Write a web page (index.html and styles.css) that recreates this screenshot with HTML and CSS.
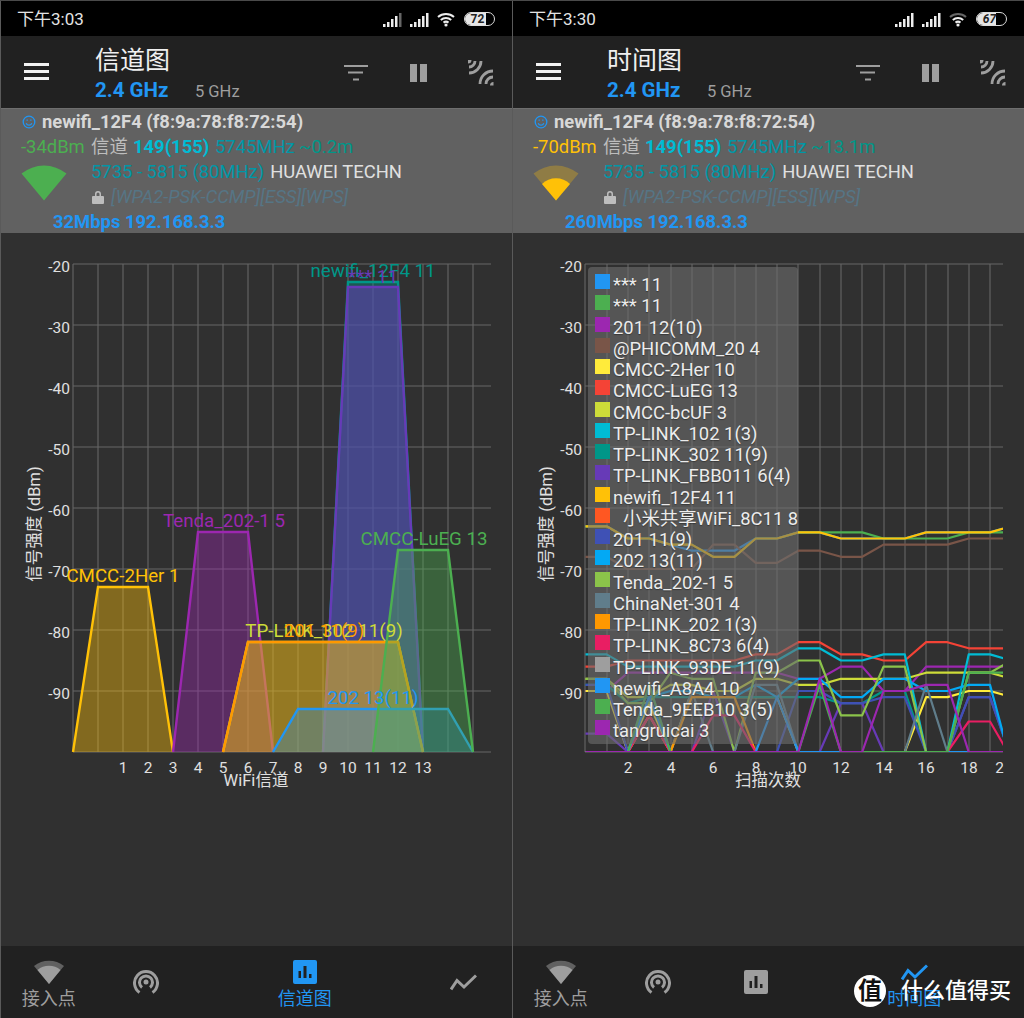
FILE: index.html
```html
<!DOCTYPE html>
<html lang="zh">
<head>
<meta charset="utf-8">
<title>WiFi 信道图 / 时间图</title>
<link rel="stylesheet" href="styles.css">
</head>
<body>
<main class="app">

<section class="pane">
  <header class="status">
    <span class="clock">下午3:03</span>
    <div class="status-icons">
      <svg class="sig" viewBox="0 0 19 15"><path class="on" d="M0 12h2.5v3H0zM4 10h2.5v5H4zM8 7h2.5v8H8zM12 4h2.5v11H12z"/><path class="dim" d="M16 1h2.5v14H16z"/></svg>
      <svg class="sig" viewBox="0 0 19 15"><path class="on" d="M0 12h2.5v3H0zM4 10h2.5v5H4zM8 7h2.5v8H8zM12 4h2.5v11H12zM16 1h2.5v14H16z"/></svg>
      <svg class="wifi-status" viewBox="0 0 20 16"><path class="arc" d="M1 6a12 12 0 0 1 16 0"/><path class="arc" d="M3.8 9a8 8 0 0 1 10.4 0"/><path class="arc" d="M6.5 11.6a4 4 0 0 1 5 0"/><circle class="on" cx="9" cy="14" r="1.6"/></svg>
      <span class="battery"><span class="battery-fill level-72"></span><b class="battery-num">72</b></span>
    </div>
  </header>
  <div class="toolbar">
    <svg class="menu" viewBox="0 0 25 17"><path d="M0 0h25v3H0zM0 7h25v3H0zM0 14h25v3H0z"/></svg>
    <div class="heading">
      <h1 class="title">信道图</h1>
      <div class="bands"><span class="band-on">2.4 GHz</span><span class="band-off">5 GHz</span></div>
    </div>
    <svg class="act-filter" viewBox="0 0 24 16"><path d="M0 0h24v2H0zM4 6.5h15v2H4zM9 13.5h6v2H9z"/></svg>
    <svg class="act-pause" viewBox="0 0 17 18"><path d="M0 0h7v18H0zM10 0h7v18h-7z"/></svg>
    <svg class="act-scan" viewBox="0 0 26 26"><path class="scan-line" d="M7 1A6 6 0 0 1 1 7M13 1A12 12 0 0 1 1 13M18 24A7 7 0 0 1 25 17M12 24A13 13 0 0 1 25 11"/><path class="scan-dot" d="M0 0h3.5a3.5 3.5 0 0 1-3.5 3.5zM25.5 25.5h-3.5a3.5 3.5 0 0 1 3.5-3.5z"/></svg>
  </div>
  <div class="info">
    <div class="ssid"><svg class="smile" viewBox="0 0 14 14"><circle cx="7" cy="7" r="5.8"/><path d="M4.2 8.3a3 3 0 0 0 5.6 0"/><path d="M4.5 5.2h1.3M8.2 5.2h1.3"/></svg><span>newifi_12F4 (f8:9a:78:f8:72:54)</span></div>
    <div class="line-signal"><span class="lvl-good">-34dBm</span><span class="muted">信道</span><b class="ch">149(155)</b><span class="freq">5745MHz</span><span class="dist">~0.2m</span></div>
    <div class="info-mid">
      <svg class="fan" viewBox="0 0 46 36"><path class="fan-good" d="M23 35.5 0.5 8.5A36 36 0 0 1 45.5 8.5Z"/></svg>
      <div class="info-col">
        <div class="line-range"><span class="freq">5735 - 5815 (80MHz)</span><span class="vendor">HUAWEI TECHN</span></div>
        <div class="line-sec"><svg class="lock" viewBox="0 0 12 14"><path d="M1 6h10a1 1 0 0 1 1 1v6a1 1 0 0 1-1 1H1a1 1 0 0 1-1-1V7a1 1 0 0 1 1-1zM3 6V4a3 3 0 0 1 6 0v2H7.5V4a1.5 1.5 0 0 0-3 0v2z"/></svg><i class="sec">[WPA2-PSK-CCMP][ESS][WPS]</i></div>
      </div>
    </div>
    <div class="speed">32Mbps 192.168.3.3</div>
  </div>
  <div class="chart">
    <svg class="plot" viewBox="0 233 512 713">
      <path class="grid" d="M73 264H491M73 325H491M73 386H491M73 447H491M73 508H491M73 569H491M73 630H491M73 691H491M73 752H491M73 264V752M98 264V752M123 264V752M148 264V752M173 264V752M198 264V752M223 264V752M248 264V752M273 264V752M298 264V752M323 264V752M348 264V752M373 264V752M398 264V752M423 264V752M448 264V752M473 264V752"/>
      <g class="ylabels"><text x="70" y="272">-20</text><text x="70" y="333">-30</text><text x="70" y="394">-40</text><text x="70" y="455">-50</text><text x="70" y="516">-60</text><text x="70" y="577">-70</text><text x="70" y="638">-80</text><text x="70" y="699">-90</text></g>
      <text class="ytitle" transform="translate(40 524) rotate(-90)">信号强度 (dBm)</text>
      <g class="xlabels"><text x="123" y="773">1</text><text x="148" y="773">2</text><text x="173" y="773">3</text><text x="198" y="773">4</text><text x="223" y="773">5</text><text x="248" y="773">6</text><text x="273" y="773">7</text><text x="298" y="773">8</text><text x="323" y="773">9</text><text x="348" y="773">10</text><text x="373" y="773">11</text><text x="398" y="773">12</text><text x="423" y="773">13</text></g>
      <text class="xtitle" x="256" y="786">WiFi信道</text>
      <polyline class="net c-teal" points="323,752 348,282 398,282 423,752"/>
      <polyline class="net c-deep" points="323,752 348,287 398,287 423,752"/>
      <polyline class="net c-amber" points="73,752 98,587 148,587 173,752"/>
      <polyline class="net c-purple" points="173,752 198,532 248,532 273,752"/>
      <polyline class="net c-lime" points="223,752 248,642 398,642 423,752"/>
      <polyline class="net c-orange" points="223,752 248,642 398,642 423,752"/>
      <polyline class="net c-blue" points="273,752 298,709 448,709 473,752"/>
      <polyline class="net c-green" points="373,752 398,550 448,550 473,752"/>
      <g class="netlabels">
        <text class="t-amber" x="123" y="582">CMCC-2Her 1</text>
        <text class="t-purple" x="224" y="527">Tenda_202-1 5</text>
        <text class="t-lime" x="324" y="637">TP-LINK_302 11(9)</text>
        <text class="t-orange" x="324" y="637">201 11(9)</text>
        <text class="t-teal" x="373" y="277">newifi_12F4 11</text>
        <text class="t-deep" x="373" y="283">*** 11</text>
        <text class="t-green" x="424" y="545">CMCC-LuEG 13</text>
        <text class="t-blue" x="373" y="704">202 13(11)</text>
      </g>
    </svg>
  </div>
  <nav class="nav">
    <div class="tab"><svg class="tab-fan" viewBox="0 0 30 24"><path class="fan-back" d="M15 24 0 6A24 24 0 0 1 30 6Z"/><path class="fan-front" d="M15 24 3.5 10A18 18 0 0 1 26.5 10Z"/></svg><span class="tab-label">接入点</span></div>
    <div class="tab"><svg class="tab-cast" viewBox="0 0 26 26"><path class="cast-line" d="M6.5 23.5A11.5 11.5 0 1 1 19.5 23.5M9 18.5A6.5 6.5 0 1 1 17 18.5"/><circle class="cast-dot" cx="13" cy="13" r="2.5"/></svg></div>
    <div class="tab tab-wide active"><svg class="tab-bars" viewBox="0 0 24 24"><rect class="bars-bg" width="24" height="24" rx="2"/><path class="bars-fg" d="M5.5 11H8v7H5.5zM10.5 6h3v12h-3zM16 14h2.5v4H16z"/></svg><span class="tab-label">信道图</span></div>
    <div class="tab"><svg class="tab-line" viewBox="0 0 27 17"><path d="M1 15.5 7 6.5 14 13 26 1.5"/></svg></div>
  </nav>
</section>

<section class="pane">
  <header class="status">
    <span class="clock">下午3:30</span>
    <div class="status-icons">
      <svg class="sig" viewBox="0 0 19 15"><path class="on" d="M0 12h2.5v3H0zM4 10h2.5v5H4zM8 7h2.5v8H8zM12 4h2.5v11H12zM16 1h2.5v14H16z"/></svg>
      <svg class="sig" viewBox="0 0 19 15"><path class="on" d="M0 12h2.5v3H0zM4 10h2.5v5H4zM8 7h2.5v8H8zM12 4h2.5v11H12zM16 1h2.5v14H16z"/></svg>
      <svg class="wifi-status" viewBox="0 0 20 16"><path class="arc arc-dim" d="M1 6a12 12 0 0 1 16 0"/><path class="arc" d="M3.8 9a8 8 0 0 1 10.4 0"/><path class="arc" d="M6.5 11.6a4 4 0 0 1 5 0"/><circle class="on" cx="9" cy="14" r="1.6"/></svg>
      <span class="battery"><span class="battery-fill level-67"></span><b class="battery-num slant">67</b></span>
    </div>
  </header>
  <div class="toolbar">
    <svg class="menu" viewBox="0 0 25 17"><path d="M0 0h25v3H0zM0 7h25v3H0zM0 14h25v3H0z"/></svg>
    <div class="heading">
      <h1 class="title">时间图</h1>
      <div class="bands"><span class="band-on">2.4 GHz</span><span class="band-off">5 GHz</span></div>
    </div>
    <svg class="act-filter" viewBox="0 0 24 16"><path d="M0 0h24v2H0zM4 6.5h15v2H4zM9 13.5h6v2H9z"/></svg>
    <svg class="act-pause" viewBox="0 0 17 18"><path d="M0 0h7v18H0zM10 0h7v18h-7z"/></svg>
    <svg class="act-scan" viewBox="0 0 26 26"><path class="scan-line" d="M7 1A6 6 0 0 1 1 7M13 1A12 12 0 0 1 1 13M18 24A7 7 0 0 1 25 17M12 24A13 13 0 0 1 25 11"/><path class="scan-dot" d="M0 0h3.5a3.5 3.5 0 0 1-3.5 3.5zM25.5 25.5h-3.5a3.5 3.5 0 0 1 3.5-3.5z"/></svg>
  </div>
  <div class="info">
    <div class="ssid"><svg class="smile" viewBox="0 0 14 14"><circle cx="7" cy="7" r="5.8"/><path d="M4.2 8.3a3 3 0 0 0 5.6 0"/><path d="M4.5 5.2h1.3M8.2 5.2h1.3"/></svg><span>newifi_12F4 (f8:9a:78:f8:72:54)</span></div>
    <div class="line-signal"><span class="lvl-mid">-70dBm</span><span class="muted">信道</span><b class="ch">149(155)</b><span class="freq">5745MHz</span><span class="dist">~13.1m</span></div>
    <div class="info-mid">
      <svg class="fan" viewBox="0 0 46 36"><path class="fan-mid-back" d="M23 35.5 0.5 8.5A36 36 0 0 1 45.5 8.5Z"/><path class="fan-mid" d="M23 35.5 9 19A20 20 0 0 1 37 19Z"/></svg>
      <div class="info-col">
        <div class="line-range"><span class="freq">5735 - 5815 (80MHz)</span><span class="vendor">HUAWEI TECHN</span></div>
        <div class="line-sec"><svg class="lock" viewBox="0 0 12 14"><path d="M1 6h10a1 1 0 0 1 1 1v6a1 1 0 0 1-1 1H1a1 1 0 0 1-1-1V7a1 1 0 0 1 1-1zM3 6V4a3 3 0 0 1 6 0v2H7.5V4a1.5 1.5 0 0 0-3 0v2z"/></svg><i class="sec">[WPA2-PSK-CCMP][ESS][WPS]</i></div>
      </div>
    </div>
    <div class="speed">260Mbps 192.168.3.3</div>
  </div>
  <div class="chart">
    <svg class="plot" viewBox="0 233 512 713">
      <defs><clipPath id="tickclip"><rect x="0" y="233" width="491.5" height="713"/></clipPath></defs>
      <path class="grid" d="M73 264H491M73 325H491M73 386H491M73 447H491M73 508H491M73 569H491M73 630H491M73 691H491M73 752H491M73 264V752M95 264V752M116 264V752M137 264V752M159 264V752M180 264V752M201 264V752M223 264V752M244 264V752M265 264V752M286 264V752M308 264V752M329 264V752M350 264V752M372 264V752M393 264V752M414 264V752M436 264V752M457 264V752M478 264V752"/>
      <g class="ylabels"><text x="70" y="272">-20</text><text x="70" y="333">-30</text><text x="70" y="394">-40</text><text x="70" y="455">-50</text><text x="70" y="516">-60</text><text x="70" y="577">-70</text><text x="70" y="638">-80</text><text x="70" y="699">-90</text></g>
      <text class="ytitle" transform="translate(40 524) rotate(-90)">信号强度 (dBm)</text>
      <g class="xlabels" clip-path="url(#tickclip)"><text x="116" y="773">2</text><text x="159" y="773">4</text><text x="201" y="773">6</text><text x="244" y="773">8</text><text x="286" y="773">10</text><text x="329" y="773">12</text><text x="372" y="773">14</text><text x="414" y="773">16</text><text x="457" y="773">18</text><text x="492" y="773">20</text></g>
      <text class="xtitle" x="256" y="786">扫描次数</text>
      <svg class="series" x="73.3" y="264" width="417.7" height="488" viewBox="0 20 19.61 80" preserveAspectRatio="none">
        <polyline class="ln s-blue" points="0,63 1,63 2,65 3,65 4,66 5,67 6,67 7,67 8,65 9,65 10,64 11,64 12,65 13,65 14,65 15,65 16,64 17,64 18,64 19,64 20,63"/>
        <polyline class="ln s-green" points="0,63 1,63 2,65 3,65 4,66 5,66 6,68 7,68 8,65 9,65 10,64 11,64 12,64 13,64 14,65 15,65 16,65 17,65 18,64 19,64 20,64"/>
        <polyline class="ln s-purple" points="0,90 1,90 2,87 3,87 4,87 5,87 6,87 7,87 8,87 9,87 10,88 11,88 12,86 13,86 14,90 15,90 16,86 17,86 18,86 19,86 20,86"/>
        <polyline class="ln s-brown" points="0,68 1,68 2,70 3,70 4,70 5,70 6,66 7,66 8,69 9,69 10,67 11,67 12,68 13,68 14,66 15,66 16,66 17,66 18,65 19,65 20,65"/>
        <polyline class="ln s-yellow" points="0,90 1,90 2,100 3,92 4,100 5,90 6,91 7,91 8,91 9,91 10,100 11,100 12,100 13,100 14,100 15,100 16,91 17,91 18,90 19,90 20,91"/>
        <polyline class="ln s-red" points="0,86 1,86 2,85 3,85 4,85 5,85 6,85 7,85 8,84 9,84 10,82 11,82 12,84 13,84 14,85 15,85 16,82 17,82 18,83 19,83 20,83"/>
        <polyline class="ln s-lime" points="0,88 1,88 2,91 3,91 4,89 5,89 6,90 7,90 8,88 9,88 10,89 11,89 12,88 13,88 14,88 15,88 16,87 17,87 18,87 19,87 20,88"/>
        <polyline class="ln s-cyan" points="0,84 1,84 2,86 3,86 4,86 5,86 6,86 7,86 8,85 9,85 10,83 11,83 12,85 13,85 14,84 15,84 16,100 17,100 18,84 19,84 20,85"/>
        <polyline class="ln s-teal" points="0,89 1,89 2,92 3,91 4,91 5,91 6,91 7,91 8,91 9,91 10,91 11,91 12,92 13,92 14,90 15,90 16,100 17,100 18,100 19,100 20,100"/>
        <polyline class="ln s-deep" points="0,97 1,97 2,100 3,100 4,100 5,100 6,90 7,100 8,100 9,100 10,100 11,100 12,92 13,92 14,100 15,100 16,100 17,100 18,91 19,91 20,101"/>
        <polyline class="ln s-amber" points="0,63 1,63 2,65 3,65 4,66 5,66 6,68 7,68 8,65 9,65 10,64 11,64 12,65 13,65 14,65 15,65 16,64 17,64 18,64 19,64 20,63"/>
        <polyline class="ln s-dorange" points="0,100 1,100 2,100 3,94 4,100 5,100 6,100 7,100 8,100 9,100 10,100 11,100 12,100 13,100 14,100 15,100 16,100 17,100 18,100 19,100 20,100"/>
        <polyline class="ln s-indigo" points="0,89 1,89 2,100 3,89 4,100 5,100 6,100 7,100 8,100 9,100 10,90 11,90 12,92 13,92 14,91 15,91 16,100 17,100 18,91 19,91 20,101"/>
        <polyline class="ln s-sky" points="0,100 1,100 2,100 3,91 4,90 5,90 6,91 7,91 8,89 9,91 10,88 11,88 12,91 13,91 14,88 15,88 16,90 17,90 18,89 19,89 20,102"/>
        <polyline class="ln s-lgreen" points="0,88 1,88 2,92 3,92 4,87 5,88 6,88 7,100 8,87 9,87 10,85 11,85 12,94 13,94 14,86 15,86 16,100 17,100 18,87 19,87 20,85"/>
        <polyline class="ln s-slate" points="0,100 1,100 2,100 3,100 4,100 5,90 6,100 7,100 8,89 9,89 10,100 11,100 12,100 13,100 14,100 15,100 16,89 17,100 18,100 19,100 20,100"/>
        <polyline class="ln s-orange" points="0,100 1,100 2,100 3,94 4,100 5,91 6,91 7,91 8,100 9,100 10,100 11,100 12,100 13,100 14,100 15,100 16,100 17,100 18,100 19,100 20,100"/>
        <polyline class="ln s-pink" points="0,100 1,100 2,100 3,94 4,100 5,100 6,94 7,94 8,100 9,100 10,100 11,100 12,100 13,100 14,100 15,100 16,100 17,100 18,95 19,95 20,101"/>
        <polyline class="ln s-blue" points="0,100 1,100 2,100 3,91 4,100 5,100 6,100 7,100 8,100 9,91 10,100 11,100 12,100 13,100 14,100 15,100 16,100 17,100 18,100 19,100 20,100"/>
        <polyline class="ln s-green" points="0,100 1,100 2,100 3,89 4,100 5,100 6,100 7,100 8,100 9,100 10,100 11,89 12,100 13,100 14,100 15,100 16,100 17,100 18,87 19,87 20,87"/>
        <polyline class="ln s-purple" points="0,100 1,100 2,100 3,100 4,100 5,100 6,100 7,100 8,100 9,100 10,100 11,88 12,100 13,100 14,90 15,90 16,89 17,89 18,100 19,100 20,100"/>
      </svg>
    </svg>
    <ul class="legend">
      <li><i class="sw b-blue"></i>*** 11</li>
      <li><i class="sw b-green"></i>*** 11</li>
      <li><i class="sw b-purple"></i>201 12(10)</li>
      <li><i class="sw b-brown"></i>@PHICOMM_20 4</li>
      <li><i class="sw b-yellow"></i>CMCC-2Her 10</li>
      <li><i class="sw b-red"></i>CMCC-LuEG 13</li>
      <li><i class="sw b-lime"></i>CMCC-bcUF 3</li>
      <li><i class="sw b-cyan"></i>TP-LINK_102 1(3)</li>
      <li><i class="sw b-teal"></i>TP-LINK_302 11(9)</li>
      <li><i class="sw b-deep"></i>TP-LINK_FBB011 6(4)</li>
      <li><i class="sw b-amber"></i>newifi_12F4 11</li>
      <li class="indent"><i class="sw b-dorange"></i>小米共享WiFi_8C11 8</li>
      <li><i class="sw b-indigo"></i>201 11(9)</li>
      <li><i class="sw b-sky"></i>202 13(11)</li>
      <li><i class="sw b-lgreen"></i>Tenda_202-1 5</li>
      <li><i class="sw b-slate"></i>ChinaNet-301 4</li>
      <li><i class="sw b-orange"></i>TP-LINK_202 1(3)</li>
      <li><i class="sw b-pink"></i>TP-LINK_8C73 6(4)</li>
      <li><i class="sw b-grey"></i>TP-LINK_93DE 11(9)</li>
      <li><i class="sw b-blue"></i>newifi_A8A4 10</li>
      <li><i class="sw b-green"></i>Tenda_9EEB10 3(5)</li>
      <li><i class="sw b-purple"></i>tangruicai 3</li>
    </ul>
  </div>
  <nav class="nav">
    <div class="tab"><svg class="tab-fan" viewBox="0 0 30 24"><path class="fan-back" d="M15 24 0 6A24 24 0 0 1 30 6Z"/><path class="fan-front" d="M15 24 3.5 10A18 18 0 0 1 26.5 10Z"/></svg><span class="tab-label">接入点</span></div>
    <div class="tab"><svg class="tab-cast" viewBox="0 0 26 26"><path class="cast-line" d="M6.5 23.5A11.5 11.5 0 1 1 19.5 23.5M9 18.5A6.5 6.5 0 1 1 17 18.5"/><circle class="cast-dot" cx="13" cy="13" r="2.5"/></svg></div>
    <div class="tab"><svg class="tab-bars idle" viewBox="0 0 24 24"><rect class="bars-bg" width="24" height="24" rx="2"/><path class="bars-fg" d="M5.5 11H8v7H5.5zM10.5 6h3v12h-3zM16 14h2.5v4H16z"/></svg></div>
    <div class="tab tab-wide active"><svg class="tab-line" viewBox="0 0 27 17"><path d="M1 15.5 7 6.5 14 13 26 1.5"/></svg><span class="tab-label">时间图</span></div>
  </nav>
  <div class="watermark"><span class="wm-badge">值</span><span class="wm-text">什么值得买</span></div>
</section>

</main>
</body>
</html>
```

FILE: styles.css
```css
* { box-sizing: border-box; }
html, body { margin: 0; padding: 0; background: #303030; }
body { font-family: Roboto, "Noto Sans CJK SC", sans-serif; color: #e0e0e0; }

.app { display: flex; width: 1024px; height: 1018px; overflow: hidden; }
.pane { position: relative; display: flex; flex-direction: column; width: 512px; height: 1018px; }
.pane::before { content: ""; position: absolute; left: 0; top: 0; bottom: 0; width: 1px; background: #5a5a5a; z-index: 5; }
.pane::after { content: ""; position: absolute; left: 0; right: 0; top: 0; height: 1px; background: #4a4a4a; z-index: 5; }

/* status bar */
.status { flex: none; height: 36px; background: #000; display: flex; align-items: center; justify-content: space-between; padding: 2px 17px 0 17px; }
.clock { font-size: 17px; color: #e4e4e4; line-height: 1; }
.status-icons { display: flex; align-items: center; }
.sig { width: 19px; height: 15px; margin-right: 8px; }
.on { fill: #eee; }
.dim { fill: #666; }
.wifi-status { width: 20px; height: 16px; margin-right: 7px; }
.arc { fill: none; stroke: #eee; stroke-width: 2; }
.arc-dim { stroke: #666; }
.battery { position: relative; display: block; width: 31px; height: 14px; border: 1.5px solid #ddd; border-radius: 7px; overflow: hidden; }
.battery-fill { position: absolute; left: 0; top: 0; bottom: 0; background: #e6e6e6; }
.level-72 { width: 72%; }
.level-67 { width: 67%; }
.battery-num { position: absolute; left: 0; right: 4px; top: -1px; text-align: center; font-size: 12px; line-height: 14px; font-weight: 700; color: #222; }
.slant { font-style: italic; }

/* toolbar */
.toolbar { flex: none; height: 72px; background: #212121; display: flex; align-items: flex-start; padding-left: 24px; }
.menu { width: 25px; height: 17px; margin-top: 27px; fill: #f2f2f2; flex: none; }
.heading { width: 249px; margin-left: 46px; padding-top: 10px; flex: none; }
.title { margin: 0; font-size: 25px; line-height: 30px; font-weight: 400; color: #f0f0f0; }
.bands { display: flex; align-items: baseline; margin-top: 2px; line-height: 24px; }
.band-on { font-size: 20.5px; font-weight: 700; color: #2196f3; width: 100px; }
.band-off { font-size: 16.5px; color: #9e9e9e; }
.act-filter { width: 24px; height: 16px; margin-top: 29px; fill: #9e9e9e; flex: none; }
.act-pause { width: 17px; height: 18px; margin-top: 28px; margin-left: 42px; fill: #9e9e9e; flex: none; }
.act-scan { width: 26px; height: 26px; margin-top: 24px; margin-left: 41px; flex: none; }
.scan-line { fill: none; stroke: #9e9e9e; stroke-width: 2.8; }
.scan-dot { fill: #9e9e9e; }

/* info panel */
.info { flex: none; height: 125px; background: #616161; border-top: 1px solid #6e6e6e; font-size: 18.4px; line-height: 25px; }
.ssid { display: flex; align-items: center; height: 25px; padding-left: 22px; font-weight: 700; color: #d8d8d8; }
.smile { width: 14px; height: 14px; margin-right: 6px; fill: none; stroke: #2196f3; stroke-width: 1.3; }
.line-signal { display: flex; padding-left: 21px; height: 25px; white-space: pre; }
.lvl-good { color: #4caf50; width: 70px; }
.lvl-mid { color: #ffc107; width: 70px; }
.muted { color: #bdbdbd; width: 42px; }
.ch { color: #00bcd4; width: 82px; }
.freq { color: #0097a7; }
.line-signal .freq { width: 84px; }
.dist { color: #009688; }
.info-mid { display: flex; height: 50px; }
.fan { width: 46px; height: 36px; margin: 6px 0 0 21px; flex: none; }
.fan-good { fill: #4caf50; }
.fan-mid-back { fill: #8f7c45; }
.fan-mid { fill: #ffc107; }
.info-col { margin-left: 24px; }
.line-range { display: flex; height: 25px; }
.vendor { margin-left: 6px; color: #e0e0e0; }
.line-sec { display: flex; align-items: center; height: 25px; }
.lock { width: 12px; height: 14px; margin-left: 1px; margin-right: 7px; fill: #bdbdbd; }
.sec { color: #567585; }
.speed { padding-left: 53px; height: 25px; font-weight: 700; color: #2196f3; }

/* chart */
.chart { position: relative; flex: 1; background: #303030; }
.plot { display: block; width: 512px; height: 713px; overflow: hidden; }
.grid { fill: none; stroke: #666; stroke-width: 1.1; }
.plot text { font-family: Roboto, "Noto Sans CJK SC", sans-serif; }
.ylabels text { text-anchor: end; font-size: 15.5px; fill: #e0e0e0; }
.xlabels text { text-anchor: middle; font-size: 15.5px; fill: #e0e0e0; }
.ytitle { text-anchor: middle; font-size: 16.5px; fill: #e0e0e0; }
.xtitle { text-anchor: middle; font-size: 16.5px; fill: #e0e0e0; }
.netlabels text { text-anchor: middle; font-size: 18.7px; }
.net { stroke-width: 2.4; fill-opacity: .4; }
.c-amber { fill: #ffc107; stroke: #ffc107; }
.c-purple { fill: #9c27b0; stroke: #9c27b0; }
.c-lime { fill: #cddc39; stroke: #cddc39; fill-opacity: .35; }
.c-orange { fill: #ff9800; stroke: #ff9800; fill-opacity: .3; }
.c-teal { fill: #009688; stroke: #009688; }
.c-deep { fill: #673ab7; stroke: #673ab7; fill-opacity: .55; }
.c-green { fill: #4caf50; stroke: #4caf50; }
.c-blue { fill: #2196f3; stroke: #2196f3; fill-opacity: .3; }
.t-amber { fill: #ffc107; }
.t-purple { fill: #9c27b0; }
.t-lime { fill: #cddc39; }
.t-orange { fill: #ff9800; }
.t-teal { fill: #009688; }
.t-deep { fill: #673ab7; }
.t-green { fill: #4caf50; }
.t-blue { fill: #2196f3; }

.ln { fill: none; stroke-width: 2.2; vector-effect: non-scaling-stroke; stroke-linejoin: round; }
.s-blue { stroke: #2196f3; }
.s-green { stroke: #4caf50; }
.s-purple { stroke: #9c27b0; }
.s-brown { stroke: #795548; }
.s-yellow { stroke: #ffeb3b; }
.s-red { stroke: #f44336; }
.s-lime { stroke: #cddc39; }
.s-cyan { stroke: #00bcd4; }
.s-teal { stroke: #009688; }
.s-deep { stroke: #673ab7; }
.s-amber { stroke: #ffc107; }
.s-dorange { stroke: #ff5722; }
.s-indigo { stroke: #3f51b5; }
.s-sky { stroke: #03a9f4; }
.s-lgreen { stroke: #8bc34a; }
.s-slate { stroke: #607d8b; }
.s-orange { stroke: #ff9800; }
.s-pink { stroke: #e91e63; }

/* legend */
.legend { position: absolute; left: 76px; top: 34px; width: 210px; height: 477px; margin: 0; padding: 7px 0 0 7px; list-style: none; background: rgba(110, 110, 110, .6); border-radius: 4px; }
.legend li { position: relative; display: flex; height: 21.26px; padding-left: 18px; font-size: 18.4px; line-height: 21px; color: #ececec; white-space: nowrap; text-shadow: 0 1px 1px rgba(0, 0, 0, .35); }
.legend .indent { padding-left: 28px; }
.sw { position: absolute; left: 0; top: 0; width: 15px; height: 15px; }
.b-blue { background: #2196f3; }
.b-green { background: #4caf50; }
.b-purple { background: #9c27b0; }
.b-brown { background: #795548; }
.b-yellow { background: #ffeb3b; }
.b-red { background: #f44336; }
.b-lime { background: #cddc39; }
.b-cyan { background: #00bcd4; }
.b-teal { background: #009688; }
.b-deep { background: #673ab7; }
.b-amber { background: #ffc107; }
.b-dorange { background: #ff5722; }
.b-indigo { background: #3f51b5; }
.b-sky { background: #03a9f4; }
.b-lgreen { background: #8bc34a; }
.b-slate { background: #607d8b; }
.b-orange { background: #ff9800; }
.b-pink { background: #e91e63; }
.b-grey { background: #9e9e9e; }

/* bottom nav */
.nav { flex: none; height: 72px; background: #212121; display: flex; }
.tab { flex: 1 1 0; display: flex; flex-direction: column; align-items: center; justify-content: center; color: #9e9e9e; }
.tab-wide { flex: 2.25 1 0; }
.tab-label { font-size: 18px; line-height: 22px; color: #9e9e9e; margin-top: 4px; margin-bottom: -6px; }
.active .tab-label { color: #2196f3; }
.tab-fan { width: 30px; height: 24px; }
.fan-back { fill: #616161; }
.fan-front { fill: #9e9e9e; }
.tab-cast { width: 26px; height: 26px; }
.cast-line { fill: none; stroke: #9e9e9e; stroke-width: 3; }
.cast-dot { fill: #9e9e9e; }
.tab-bars { width: 24px; height: 24px; }
.bars-bg { fill: #2196f3; }
.bars-fg { fill: #212121; }
.idle .bars-bg { fill: #9e9e9e; }
.tab-line { width: 27px; height: 17px; fill: none; stroke: #9e9e9e; stroke-width: 3; }
.active .tab-line { stroke: #2196f3; margin-top: 4px; margin-bottom: 3px; }

/* watermark */
.watermark { position: absolute; left: 342px; top: 975px; display: flex; align-items: center; z-index: 4; }
.wm-badge { display: flex; align-items: center; justify-content: center; width: 32px; height: 32px; border-radius: 50%; background: #fff; color: #111; font-size: 24px; font-weight: 700; line-height: 1; }
.wm-text { margin-left: 15px; font-size: 22px; line-height: 32px; color: #fff; font-weight: 500; white-space: nowrap; }
```
